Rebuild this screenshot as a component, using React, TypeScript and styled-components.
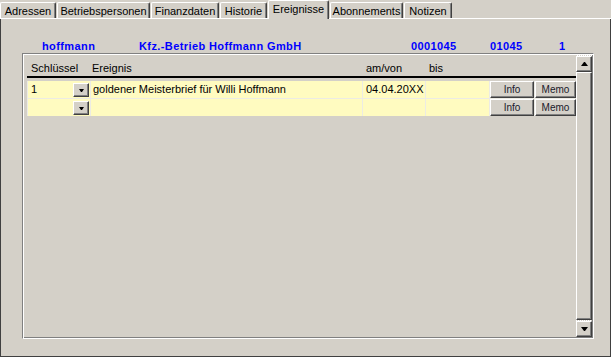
import styled, { createGlobalStyle, css } from 'styled-components';

const GlobalStyle = createGlobalStyle`
  html, body {
    margin: 0;
    padding: 0;
    background: #d4d0c8;
  }
  body {
    font-family: "Liberation Sans", Arial, sans-serif;
    font-size: 11px;
    color: #000;
  }
`;

const TABS = [
  { label: 'Adressen', width: 56 },
  { label: 'Betriebspersonen', width: 93 },
  { label: 'Finanzdaten', width: 68 },
  { label: 'Historie', width: 47 },
  { label: 'Ereignisse', width: 61, active: true },
  { label: 'Abonnements', width: 73 },
  { label: 'Notizen', width: 48 },
];

const EVENTS = [
  { key: '1', text: 'goldener Meisterbrief für Willi Hoffmann', from: '04.04.20XX', to: '' },
  { key: '', text: '', from: '', to: '' },
];

const raised = css`
  box-sizing: border-box;
  background: #d4d0c8;
  border: 1px solid;
  border-color: #fff #404040 #404040 #fff;
  box-shadow: inset -1px -1px #808080;
`;

export default function App() {
  return (
    <>
      <GlobalStyle />
      <Window>
        <TabStrip>
          {TABS.map((t) => (
            <Tab key={t.label} $width={t.width} $active={t.active}>
              {t.label}
            </Tab>
          ))}
        </TabStrip>
        <Panel>
          <InfoRow>
            <span>hoffmann</span>
            <span>Kfz.-Betrieb Hoffmann GmbH</span>
            <span>0001045</span>
            <span>01045</span>
            <span>1</span>
          </InfoRow>
          <GridFrame>
            <TableArea>
              <HeaderRow>
                <HeadCell>Schlüssel</HeadCell>
                <HeadCell $pad={1}>Ereignis</HeadCell>
                <HeadCell>am/von</HeadCell>
                <HeadCell>bis</HeadCell>
              </HeaderRow>
              <Rows>
                {EVENTS.map((ev, i) => (
                  <Row key={i}>
                    <KeyCell>
                      <span>{ev.key}</span>
                      <ComboButton>
                        <ArrowDown />
                      </ComboButton>
                    </KeyCell>
                    <Cell $pad={2}>{ev.text}</Cell>
                    <Cell>{ev.from}</Cell>
                    <Cell>{ev.to}</Cell>
                    <ActionButton>Info</ActionButton>
                    <ActionButton>Memo</ActionButton>
                  </Row>
                ))}
              </Rows>
            </TableArea>
            <ScrollBar>
              <ScrollButton>
                <ArrowUp />
              </ScrollButton>
              <Thumb />
              <ScrollButton>
                <ArrowDownLarge />
              </ScrollButton>
            </ScrollBar>
          </GridFrame>
        </Panel>
      </Window>
    </>
  );
}

const Window = styled.div`
  width: 611px;
  height: 357px;
  display: flex;
  flex-direction: column;
  background: #d4d0c8;
  overflow: hidden;
`;

const TabStrip = styled.div`
  height: 19px;
  flex: 0 0 auto;
  display: flex;
  align-items: flex-end;
  background: linear-gradient(to top, #fff 1px, transparent 1px);
`;

const Tab = styled.div<{ $width: number; $active?: boolean }>`
  box-sizing: border-box;
  width: ${(p) => p.$width}px;
  height: ${(p) => (p.$active ? 19 : 16)}px;
  margin-bottom: ${(p) => (p.$active ? 0 : 1)}px;
  margin-right: 1px;
  padding-bottom: ${(p) => (p.$active ? 2 : 0)}px;
  background: #d4d0c8;
  border-top: 1px solid #fff;
  border-left: 1px solid #fff;
  border-right: 1px solid #404040;
  border-top-left-radius: 2px;
  border-top-right-radius: 2px;
  box-shadow: inset -1px 0 #808080;
  display: flex;
  align-items: center;
  justify-content: center;
  line-height: 14px;
  white-space: nowrap;
`;

const Panel = styled.div`
  flex: 1;
  box-sizing: border-box;
  border: 1px solid #404040;
  border-top: none;
  padding-top: 20px;
`;

const InfoRow = styled.div`
  display: grid;
  grid-template-columns: 97px 272px 79px 69px auto;
  padding-left: 41px;
  line-height: 14px;
  color: #0000ff;
  font-weight: bold;
  letter-spacing: 0.4px;
  white-space: nowrap;
`;

const GridFrame = styled.div`
  box-sizing: border-box;
  margin-left: 21px;
  width: 572px;
  height: 286px;
  padding: 1px;
  border: 1px solid;
  border-color: #808080 #fff #fff #808080;
  box-shadow: inset 1px 1px #fff, inset -1px -1px #808080;
  display: flex;
`;

const TableArea = styled.div`
  flex: 1;
  padding-left: 3px;
`;

const columns = css`
  display: grid;
  grid-template-columns: 62px 271px 62px 63px 44px 41px;
  column-gap: 1px;
  padding-left: 1px;
  width: 549px;
  box-sizing: border-box;
`;

const HeaderRow = styled.div`
  ${columns};
  height: 23px;
  box-sizing: border-box;
  padding-top: 7px;
  line-height: 13px;
  border-bottom: 2px solid #000;
`;

const HeadCell = styled.div<{ $pad?: number }>`
  padding-left: ${(p) => p.$pad ?? 3}px;
  white-space: nowrap;
`;

const Rows = styled.div`
  margin-top: 3px;
  width: 549px;
  display: flex;
  flex-direction: column;
  gap: 1px;
  background: #ecebe4;
`;

const Row = styled.div`
  ${columns};
  height: 17px;
  background: #ecebe4;
`;

const Cell = styled.div<{ $pad?: number }>`
  background: #fffbc0;
  padding-left: ${(p) => p.$pad ?? 3}px;
  line-height: 17px;
  white-space: nowrap;
  overflow: hidden;
`;

const KeyCell = styled(Cell)`
  display: flex;
  align-items: center;
  justify-content: space-between;
  padding-right: 1px;
`;

const ComboButton = styled.div`
  ${raised};
  width: 16px;
  height: 14px;
  margin-top: 1px;
  display: flex;
  align-items: center;
  justify-content: center;
`;

const ArrowDown = styled.span`
  width: 1px;
  height: 0;
  border-left: 2px solid transparent;
  border-right: 2px solid transparent;
  border-top: 3px solid #000;
`;

const ActionButton = styled.button`
  ${raised};
  margin: 0;
  padding: 0;
  height: 17px;
  font-family: "Liberation Sans", Arial, sans-serif;
  font-size: 10px;
  color: #1a1a2a;
  line-height: 14px;
`;

const ScrollBar = styled.div`
  width: 16px;
  padding-top: 1px;
  display: flex;
  flex-direction: column;
  background: repeating-conic-gradient(#fff 0 25%, #d4d0c8 0 50%) 0 0 / 2px 2px;
`;

const ScrollButton = styled.div`
  ${raised};
  height: 16px;
  flex: 0 0 auto;
  display: flex;
  align-items: center;
  justify-content: center;
`;

const Thumb = styled.div`
  ${raised};
  flex: 1;
  margin-bottom: 1px;
`;

const ArrowUp = styled.span`
  width: 1px;
  height: 0;
  border-left: 3px solid transparent;
  border-right: 3px solid transparent;
  border-bottom: 4px solid #000;
`;

const ArrowDownLarge = styled.span`
  width: 1px;
  height: 0;
  border-left: 3px solid transparent;
  border-right: 3px solid transparent;
  border-top: 4px solid #000;
`;
